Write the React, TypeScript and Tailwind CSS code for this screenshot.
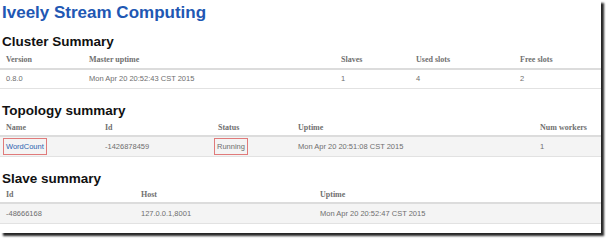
import React from "react";

const sans = { fontFamily: '"Liberation Sans", Arial, sans-serif' };

function HeadCell({ w, children }: { w: string; children: React.ReactNode }) {
  return (
    <div
      className={`${w} pl-[6px] text-[8px] font-bold text-[#707070] whitespace-nowrap`}
      style={{ fontFamily: '"Liberation Serif", "Times New Roman", serif' }}
    >
      {children}
    </div>
  );
}

function Cell({ w, children }: { w: string; children: React.ReactNode }) {
  return <div className={`${w} pl-[6px] text-[7.5px] text-[#6e6e6e] whitespace-nowrap`}>{children}</div>;
}

export default function App() {
  return (
    <div className="w-[606px] h-[240px] bg-white overflow-hidden antialiased" style={sans}>
      <div className="w-[601px] h-[233px] bg-white shadow-[3px_3px_2px_rgba(0,0,0,0.85)] flex flex-col">
        <h1 className="h-[24px] pl-[2px] flex items-center text-[17px] font-bold text-[#2157b3] leading-none">
          Iveely Stream Computing
        </h1>

        <h2 className="mt-[8px] h-[20px] pl-[2px] flex items-center text-[13.5px] font-bold text-[#111] leading-none">
          Cluster Summary
        </h2>
        <div className="h-[18px] flex items-center border-b-2 border-[#dcdcdc]">
          <HeadCell w="w-[83px]">Version</HeadCell>
          <HeadCell w="w-[252px]">Master uptime</HeadCell>
          <HeadCell w="w-[75px]">Slaves</HeadCell>
          <HeadCell w="w-[104px]">Used slots</HeadCell>
          <HeadCell w="flex-1">Free slots</HeadCell>
        </div>
        <div className="h-[19px] flex items-center border-b border-[#e2e2e2]">
          <Cell w="w-[83px]">0.8.0</Cell>
          <Cell w="w-[252px]">Mon Apr 20 20:52:43 CST 2015</Cell>
          <Cell w="w-[75px]">1</Cell>
          <Cell w="w-[104px]">4</Cell>
          <Cell w="flex-1">2</Cell>
        </div>

        <h2 className="h-[31px] pt-[12px] pl-[2px] flex items-center text-[13.5px] font-bold text-[#111] leading-none">
          Topology summary
        </h2>
        <div className="h-[17px] flex items-center border-b-2 border-[#dcdcdc]">
          <HeadCell w="w-[99px]">Name</HeadCell>
          <HeadCell w="w-[113px]">Id</HeadCell>
          <HeadCell w="w-[80px]">Status</HeadCell>
          <HeadCell w="w-[242px]">Uptime</HeadCell>
          <HeadCell w="flex-1">Num workers</HeadCell>
        </div>
        <div className="h-[20px] flex items-center bg-[#f4f4f4] border-b border-[#e2e2e2]">
          <div className="w-[99px] pl-[3px] text-[7.5px] whitespace-nowrap">
            <span className="inline-flex items-center h-[17px] px-[2px] border border-[#e07a7a] text-[#2c63b0]">
              WordCount
            </span>
          </div>
          <Cell w="w-[113px]">-1426878459</Cell>
          <div className="w-[80px] pl-[2px] text-[7.5px] whitespace-nowrap">
            <span className="inline-flex items-center h-[17px] px-[2px] border border-[#e07a7a] text-[#6e6e6e]">
              Running
            </span>
          </div>
          <Cell w="w-[242px]">Mon Apr 20 20:51:08 CST 2015</Cell>
          <Cell w="flex-1">1</Cell>
        </div>

        <h2 className="h-[31px] pt-[12px] pl-[2px] flex items-center text-[13.5px] font-bold text-[#111] leading-none">
          Slave summary
        </h2>
        <div className="h-[16px] flex items-center border-b-2 border-[#dcdcdc]">
          <HeadCell w="w-[135px]">Id</HeadCell>
          <HeadCell w="w-[179px]">Host</HeadCell>
          <HeadCell w="flex-1">Uptime</HeadCell>
        </div>
        <div className="h-[20px] flex items-center bg-[#f4f4f4] border-b border-[#e2e2e2]">
          <Cell w="w-[135px]">-48666168</Cell>
          <Cell w="w-[179px]">127.0.0.1,8001</Cell>
          <Cell w="flex-1">Mon Apr 20 20:52:47 CST 2015</Cell>
        </div>
      </div>
    </div>
  );
}
